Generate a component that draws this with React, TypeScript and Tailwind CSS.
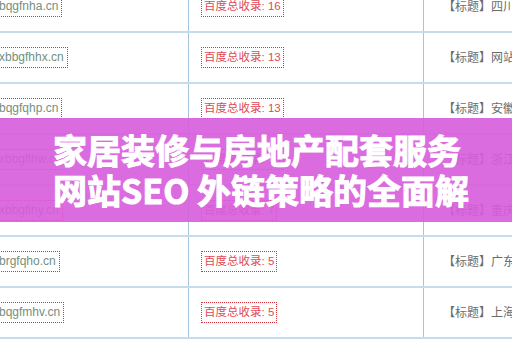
import React from 'react';

type Row = { domain: string; count: number; title: string };

const rows: Row[] = [
  { domain: 'bqgfnha.cn', count: 16, title: '四川新闻网' },
  { domain: 'xbbgfhhx.cn', count: 13, title: '网站建设' },
  { domain: 'bqgfqhp.cn', count: 13, title: '安徽新闻网' },
  { domain: 'xbbgflhw.cn', count: 13, title: '浙江新闻网' },
  { domain: 'xbbgflhy.cn', count: 7, title: '重庆新闻网' },
  { domain: 'brgfqho.cn', count: 5, title: '广东新闻网' },
  { domain: 'bqgfmhv.cn', count: 5, title: '上海新闻网' },
];

const cellFont = { fontFamily: '"Liberation Sans", "Noto Sans CJK SC", sans-serif' };

export default function App() {
  return (
    <div className="relative w-[512px] h-[340px] overflow-hidden bg-white" style={cellFont}>
      {/* table underneath */}
      <div className="-mt-[18px] -ml-[4px] w-[560px]">
        {rows.map((r) => (
          <div key={r.domain} className="flex h-[51px] border-b-2 border-[#c6dcea]">
            <div className="w-[193px] shrink-0 flex items-center border-r border-[#a3c6de]">
              <span className="border border-dotted border-[#d8333d] pl-[2px] pr-[3px] h-[21px] leading-[19px] text-[12px] text-[#74907f]">
                {r.domain}
              </span>
            </div>
            <div className="w-[235px] shrink-0 flex items-center pl-[12px] border-r border-[#a3c6de]">
              <span className="border border-dotted border-[#d8333d] px-[2px] h-[21px] leading-[19px] text-[11.5px] text-[#df4a55]">
                百度总收录: {r.count}
              </span>
            </div>
            <div className="flex-1 flex items-center pl-[19px] text-[12px] text-[#6b6b6b] whitespace-nowrap">
              【标题】{r.title}
            </div>
          </div>
        ))}
      </div>

      {/* title banner */}
      <div className="absolute left-0 right-0 top-[118px] h-[104px] bg-[#d75cdc]/90 flex flex-col justify-center pl-[53px]">
        <div
          className="text-white font-bold text-[34px] leading-[40px] whitespace-nowrap [-webkit-text-stroke:1px_white]"
          style={{ fontFamily: '"Noto Sans CJK SC", "Noto Sans", sans-serif' }}
        >
          <div>家居装修与房地产配套服务</div>
          <div>网站SEO 外链策略的全面解</div>
        </div>
      </div>
    </div>
  );
}
